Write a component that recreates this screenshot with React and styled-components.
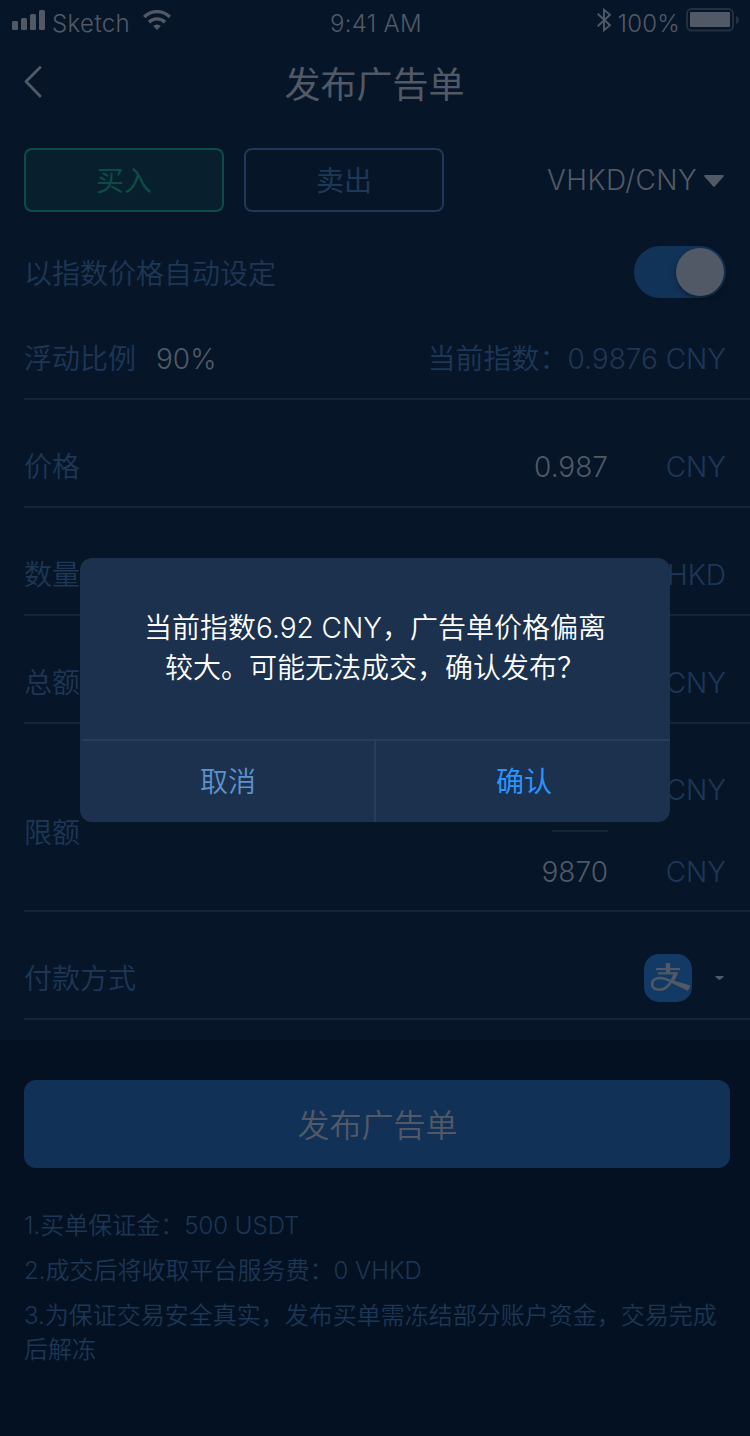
import React from "react";
import styled, { createGlobalStyle } from "styled-components";

const Global = createGlobalStyle`
  * { box-sizing: border-box; }
  body {
    margin: 0;
    background: #041122;
    font-family: Inter, "Noto Sans CJK SC", sans-serif;
    font-weight: 350;
    font-size: 28px;
    color: #525966;
  }
  button { font: inherit; color: inherit; background: none; border: 0; padding: 0; }
`;

const Page = styled.div`
  position: relative;
  width: 750px;
  height: 1436px;
  overflow: hidden;
  background: #041122;
`;

const Sheet = styled.main`
  height: 1040px;
  background: #061628;
`;

const StatusBar = styled.div`
  display: grid;
  grid-template-columns: 1fr auto 1fr;
  align-items: center;
  height: 40px;
  padding: 8px 10px 0 12px;
  font-size: 24px;
  line-height: 32px;
`;

const StatusGroup = styled.div`
  display: flex;
  align-items: center;
  justify-content: ${(p) => (p.$end ? "flex-end" : "flex-start")};
  svg { display: block; margin-top: -8px; }
`;

const StatusText = styled.span`
  letter-spacing: ${(p) => p.$track || 0}px;
  margin: ${(p) => p.$margin || 0};
`;

const NavBar = styled.header`
  display: grid;
  grid-template-columns: 60px 1fr 60px;
  align-items: center;
  height: 88px;
  padding: 0 0 0 24px;
  svg { display: block; margin-top: -4px; }
`;

const Title = styled.h1`
  margin: 2px 25px 0 0;
  text-align: center;
  font-size: 36px;
  font-weight: 400;
  line-height: 50px;
`;

const TabRow = styled.div`
  display: flex;
  gap: 20px;
  align-items: center;
  padding: 20px 26px 0 24px;
`;

const tones = {
  buy: { line: "#0d4c46", fill: "#081f2e" },
  sell: { line: "#1f3857", fill: "transparent" },
};

const Tab = styled.button`
  width: 200px;
  height: 64px;
  border: 2px solid ${(p) => tones[p.$tone].line};
  border-radius: 8px;
  background: ${(p) => tones[p.$tone].fill};
  color: ${(p) => tones[p.$tone].line};
  font-weight: 400;
  line-height: 62px;
`;

const Pair = styled.div`
  display: flex;
  align-items: center;
  gap: 7px;
  margin-left: auto;
  letter-spacing: ${(p) => p.$track}px;
  svg { display: block; margin-top: 2px; }
`;

const SwitchRow = styled.div`
  display: flex;
  align-items: center;
  justify-content: space-between;
  height: 52px;
  margin: 34px 24px 0;
`;

const Switch = styled.div`
  display: flex;
  justify-content: flex-end;
  width: 92px;
  height: 52px;
  padding: 2px;
  border-radius: 26px;
  background: #123358;
`;

const Knob = styled.div`
  width: 48px;
  height: 48px;
  border-radius: 50%;
  background: #525966;
  box-shadow: 0 3px 6px rgba(0, 0, 0, 0.35);
`;

const Row = styled.div`
  display: flex;
  align-items: center;
  height: ${(p) => p.$height || 108}px;
  margin-left: 24px;
  padding: ${(p) => (p.$top === undefined ? 28 : p.$top)}px 24px 0 0;
  border-bottom: 2px solid #142537;
  line-height: 40px;
`;

const Label = styled.span`
  padding-top: ${(p) => p.$drop || 0}px;
  color: #1e3756;
`;

const Value = styled.span`
  margin-left: ${(p) => p.$left || 0}px;
`;

const IndexPrice = styled.span`
  margin-left: auto;
  color: #1e3756;
  white-space: nowrap;
`;

const Amount = styled.div`
  display: grid;
  grid-template-columns: auto 118px;
  margin-left: auto;
  text-align: right;
`;

const LimitColumn = styled.div`
  display: flex;
  flex-direction: column;
  margin-left: auto;
`;

const LimitDash = styled.div`
  width: 56px;
  height: 2px;
  margin: 20px 118px 20px auto;
  background: #142537;
`;

const PayMethod = styled.div`
  display: flex;
  align-items: center;
  gap: 23px;
  margin: -2px 2px 0 auto;
  svg { display: block; }
`;

const Submit = styled.button`
  display: block;
  width: 706px;
  height: 88px;
  margin: 40px 0 0 24px;
  padding: 3px 0 0 1px;
  border-radius: 12px;
  background: #123156;
  color: #525966;
  font-size: 32px;
  line-height: 85px;
`;

const Notes = styled.div`
  display: flex;
  flex-direction: column;
  gap: 11px;
  margin: 41px 24px 0;
  color: #1c3654;
  font-size: 24px;
  line-height: 34px;
`;

const Note = styled.p`
  margin: 0;
  white-space: nowrap;
`;

const Dialog = styled.section`
  position: absolute;
  left: 80px;
  top: 558px;
  width: 590px;
  height: 264px;
  border-radius: 12px;
  overflow: hidden;
  background: #1c314e;
`;

const Message = styled.p`
  margin: 0;
  height: 181px;
  padding-top: 50px;
  text-align: center;
  color: #fff;
  line-height: 40px;
  white-space: nowrap;
`;

const Actions = styled.div`
  display: grid;
  grid-template-columns: 1fr 1fr;
  height: 83px;
  margin-left: 2px;
  border-top: 2px solid #283d5a;
`;

const Action = styled.button`
  color: ${(p) => (p.$primary ? "#2b93fd" : "#5c93cc")};
  font-weight: ${(p) => (p.$primary ? 400 : 350)};
  border-right: ${(p) => (p.$primary ? "0" : "2px solid #283d5a")};
  padding-left: ${(p) => (p.$primary ? 2 : 0)}px;
  line-height: 78px;
`;

const Signal = () => (
  <svg width="33" height="20" viewBox="0 0 33 20" fill="#525966">
    <rect x="0" y="11" width="6" height="9" rx="1.5" />
    <rect x="9" y="8" width="6" height="12" rx="1.5" />
    <rect x="18" y="4" width="6" height="16" rx="1.5" />
    <rect x="27" y="0" width="6" height="20" rx="1.5" />
  </svg>
);

const Wifi = () => (
  <svg width="28" height="20" viewBox="0 0 28 20" fill="none" stroke="#525966" strokeWidth="3.4">
    <path d="M1.2 7A18 18 0 0 1 26.8 7" />
    <path d="M6 12.2A11.4 11.4 0 0 1 22 12.2" />
    <path d="M14 20L10.2 16.1A5.4 5.4 0 0 1 17.8 16.1Z" fill="#525966" stroke="none" />
  </svg>
);

const Bluetooth = () => (
  <svg width="14" height="24" viewBox="0 0 14 24" fill="none" stroke="#525966" strokeWidth="1.9">
    <path d="M0.7 5.8L13 17.2L7 22.2V1.8L13 6.8L0.7 18.2" />
  </svg>
);

const Battery = () => (
  <svg width="54" height="24" viewBox="0 0 54 24">
    <rect x="1" y="1" width="46" height="21.5" rx="4.5" fill="none" stroke="#252f3f" strokeWidth="2" />
    <rect x="4" y="4" width="40" height="15" rx="1" fill="#525966" />
    <path d="M50 8Q53 9 53 12T50 16Z" fill="#252f3f" />
  </svg>
);

const Back = () => (
  <svg width="20" height="32" viewBox="0 0 20 32" fill="none" stroke="#525966" strokeWidth="2.8" strokeLinecap="round" strokeLinejoin="round">
    <path d="M16 1.5L2 15.5L16 30" />
  </svg>
);

const Caret = () => (
  <svg width="20" height="12" viewBox="0 0 20 12" fill="#525966">
    <path d="M1.2 0H18.8Q20.4 0.2 19.4 1.7L11 11.3Q10 12.4 9 11.3L0.6 1.7Q-0.4 0.2 1.2 0Z" />
  </svg>
);

const SmallCaret = () => (
  <svg width="9" height="4" viewBox="0 0 9 4" fill="#525966">
    <path d="M0.5 0H8.5Q9 1 8 1.6L5.3 3.6Q4.5 4.2 3.7 3.6L1 1.6Q0 1 0.5 0Z" />
  </svg>
);

const Alipay = () => (
  <svg width="48" height="48" viewBox="0 0 48 48">
    <rect width="48" height="48" rx="15" fill="#123a65" />
    <g fill="#525966">
      <rect x="12" y="14" width="24" height="2.1" />
      <rect x="21.8" y="9" width="4.3" height="10.5" />
      <rect x="14" y="18.3" width="17.5" height="2.1" />
      <path d="M28.8 26.2L46.2 31.4Q46 34.4 43.8 36.8L26.6 28.6Z" />
      <path d="M29.5 18.3H34C33 22.5 31 26 28.6 29L25.4 27.4C27.6 24.6 29 21.6 29.5 18.3Z" />
    </g>
    <path d="M28 26.5C24.6 32 20.8 35.8 15.8 35.8C10.8 35.8 8.1 33.6 8.1 30C8.1 26.2 11.6 24 16 24C21.4 24 26 26.8 33 30" fill="none" stroke="#525966" strokeWidth="2.4" />
  </svg>
);

const AmountRow = ({ label, value, unit }) => (
  <Row>
    <Label>{label}</Label>
    <Amount>
      <Value>{value}</Value>
      <Label>{unit}</Label>
    </Amount>
  </Row>
);

export default function App() {
  return (
    <Page>
      <Global />
      <Sheet>
        <StatusBar>
          <StatusGroup>
            <Signal />
            <StatusText $margin="0 13px 0 7px" $track={0.4}>Sketch</StatusText>
            <Wifi />
          </StatusGroup>
          <StatusText $track={0.3}>9:41 AM</StatusText>
          <StatusGroup $end>
            <Bluetooth />
            <StatusText $margin="0 6px 0 7px" $track={0.2}>100%</StatusText>
            <Battery />
          </StatusGroup>
        </StatusBar>
        <NavBar>
          <Back />
          <Title>发布广告单</Title>
        </NavBar>
        <TabRow>
          <Tab $tone="buy">买入</Tab>
          <Tab $tone="sell">卖出</Tab>
          <Pair $track={0.4}>
            VHKD/CNY
            <Caret />
          </Pair>
        </TabRow>
        <SwitchRow>
          <Label>以指数价格自动设定</Label>
          <Switch>
            <Knob />
          </Switch>
        </SwitchRow>
        <Row $height={102} $top={22}>
          <Label>浮动比例</Label>
          <Value $left={20}>90%</Value>
          <IndexPrice>当前指数：0.9876 CNY</IndexPrice>
        </Row>
        <AmountRow label="价格" value="0.987" unit="CNY" />
        <AmountRow label="数量" unit="VHKD" />
        <AmountRow label="总额" unit="CNY" />
        <Row $height={188}>
          <Label $drop={4}>限额</Label>
          <LimitColumn>
            <Amount>
              <Value />
              <Label>CNY</Label>
            </Amount>
            <LimitDash />
            <Amount>
              <Value>9870</Value>
              <Label>CNY</Label>
            </Amount>
          </LimitColumn>
        </Row>
        <Row>
          <Label>付款方式</Label>
          <PayMethod>
            <Alipay />
            <SmallCaret />
          </PayMethod>
        </Row>
      </Sheet>
      <Submit>发布广告单</Submit>
      <Notes>
        <Note>1.买单保证金：500 USDT</Note>
        <Note>2.成交后将收取平台服务费：0 VHKD</Note>
        <Note>
          3.为保证交易安全真实，发布买单需冻结部分账户资金，交易完成
          <br />
          后解冻
        </Note>
      </Notes>
      <Dialog>
        <Message>
          当前指数6.92 CNY，广告单价格偏离
          <br />
          较大。可能无法成交，确认发布？
        </Message>
        <Actions>
          <Action>取消</Action>
          <Action $primary>确认</Action>
        </Actions>
      </Dialog>
    </Page>
  );
}
